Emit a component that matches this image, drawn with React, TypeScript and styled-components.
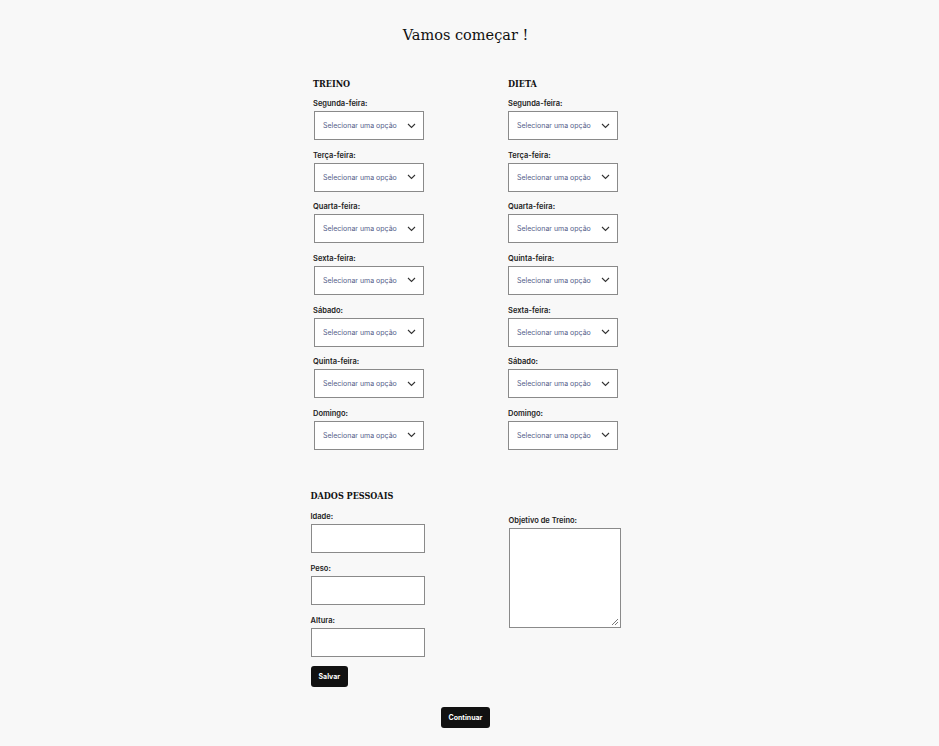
import React from "react";
import styled, { createGlobalStyle } from "styled-components";

const Global = createGlobalStyle`
  html, body { margin: 0; padding: 0; background: #f8f8f8; }
  * { box-sizing: border-box; }
`;

const Page = styled.div`
  width: 931px;
  min-height: 746px;
  display: flex;
  flex-direction: column;
  align-items: center;
  font-family: Inter, "Liberation Sans", sans-serif;
`;

const Title = styled.h1`
  margin: 25px 0 0;
  font-family: "DejaVu Serif", serif;
  font-weight: 400;
  font-size: 14.5px;
  line-height: 20px;
  color: #111;
`;

const TopGrid = styled.div`
  margin-top: 33px;
  width: 305px;
  display: grid;
  grid-template-columns: 195px 110px;
`;

const Column = styled.div`
  display: flex;
  flex-direction: column;
`;

const Heading = styled.h2<{ $mb?: number }>`
  margin: 0 0 ${(p) => p.$mb ?? 9}px;
  font-family: "DejaVu Serif Condensed", "DejaVu Serif", serif;
  font-weight: 700;
  font-size: 9px;
  line-height: 12px;
  color: #111;
`;

const Field = styled.div<{ $gap?: number }>`
  display: flex;
  flex-direction: column;
  margin-bottom: ${(p) => p.$gap ?? 10.67}px;
`;

const Label = styled.label`
  font-family: Inter, "Liberation Sans", sans-serif;
  font-weight: 600;
  font-size: 7.5px;
  line-height: 10px;
  color: #222;
  margin-bottom: 2px;
`;

const SelectBox = styled.div<{ $offset?: number }>`
  width: 110px;
  height: 29px;
  margin-left: ${(p) => p.$offset ?? 1}px;
  border: 1px solid #8a8a8a;
  background: #fff;
  display: flex;
  align-items: center;
  justify-content: space-between;
  padding: 0 7px 0 8px;
  font-size: 7px;
  color: #55608a;
`;

const Input = styled.div<{ $w: number; $h: number }>`
  width: ${(p) => p.$w}px;
  height: ${(p) => p.$h}px;
  border: 1px solid #8a8a8a;
  background: #fff;
  position: relative;
`;

const Grip = styled.svg`
  position: absolute;
  right: 1px;
  bottom: 1px;
`;

const BottomGrid = styled.div`
  margin-top: 29px;
  width: 310px;
  display: grid;
  grid-template-columns: 198px 112px;
`;

const RightCol = styled(Column)`
  padding-top: 26px;
`;

const Button = styled.button`
  align-self: flex-start;
  height: 21px;
  padding: 0 8px;
  margin-top: -2px;
  border: none;
  border-radius: 3px;
  background: #111;
  color: #fff;
  font-family: Inter, "Liberation Sans", sans-serif;
  font-weight: 700;
  font-size: 7px;
  cursor: pointer;
`;

const CenterButton = styled(Button)`
  align-self: center;
  margin-top: 20px;
`;

const Chevron = () => (
  <svg width="9" height="6" viewBox="0 0 9 6">
    <path d="M1 1 L4.5 4.5 L8 1" fill="none" stroke="#333" strokeWidth="1.1" />
  </svg>
);

const treino = ["Segunda-feira:", "Terça-feira:", "Quarta-feira:", "Sexta-feira:", "Sábado:", "Quinta-feira:", "Domingo:"];
const dieta = ["Segunda-feira:", "Terça-feira:", "Quarta-feira:", "Quinta-feira:", "Sexta-feira:", "Sábado:", "Domingo:"];

const SelectField = ({ label, offset }: { label: string; offset?: number }) => (
  <Field>
    <Label>{label}</Label>
    <SelectBox $offset={offset}>
      <span>Selecionar uma opção</span>
      <Chevron />
    </SelectBox>
  </Field>
);

export default function App() {
  return (
    <>
      <Global />
      <Page>
        <Title>Vamos começar !</Title>
        <TopGrid>
          <Column>
            <Heading>TREINO</Heading>
            {treino.map((d, i) => (
              <SelectField key={i} label={d} />
            ))}
          </Column>
          <Column>
            <Heading>DIETA</Heading>
            {dieta.map((d, i) => (
              <SelectField key={i} label={d} offset={0} />
            ))}
          </Column>
        </TopGrid>
        <BottomGrid>
          <Column>
            <Heading $mb={10}>DADOS PESSOAIS</Heading>
            {["Idade:", "Peso:", "Altura:"].map((l) => (
              <Field key={l} $gap={11}>
                <Label>{l}</Label>
                <Input $w={114} $h={29} />
              </Field>
            ))}
            <Button>Salvar</Button>
          </Column>
          <RightCol>
            <Field>
              <Label>Objetivo de Treino:</Label>
              <Input $w={112} $h={100}>
                <Grip width="9" height="9" viewBox="0 0 9 9">
                  <path d="M8 2 L2 8 M8 5 L5 8" stroke="#555" strokeWidth="0.8" />
                </Grip>
              </Input>
            </Field>
          </RightCol>
        </BottomGrid>
        <CenterButton>Continuar</CenterButton>
      </Page>
    </>
  );
}
